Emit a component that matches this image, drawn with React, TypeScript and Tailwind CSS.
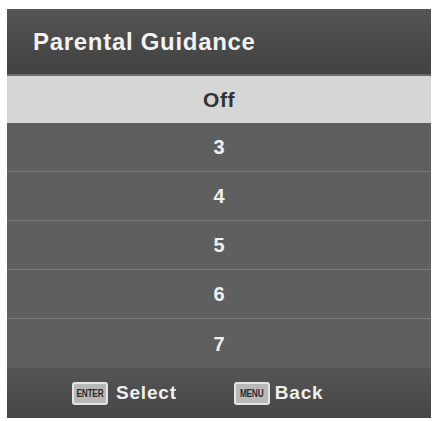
const items = ["3", "4", "5", "6", "7"];

function KeyBadge({ label }: { label: string }) {
  return (
    <span className="flex h-[23px] w-[36px] items-center justify-center rounded-[3px] border-2 border-[#e4e4e4] bg-[#b8b8b8]">
      <span className="scale-x-75 text-[11px] font-bold leading-none tracking-tight text-[#2a2a2a]">
        {label}
      </span>
    </span>
  );
}

export default function App() {
  return (
    <div
      className="h-[421px] w-[434px] bg-white pl-[7px] pr-[3px] pt-[9px]"
      style={{ fontFamily: '"Liberation Sans", Arial, sans-serif' }}
    >
      <div className="flex flex-col overflow-hidden bg-[#5c5c5c]">
        <div className="flex h-[67px] items-center bg-gradient-to-b from-[#555] via-[#4a4a4a] to-[#424242] px-[26px] border-b-2 border-[#6a6a6a]">
          <h1 className="text-[24px] font-bold tracking-[0.7px] text-[#f2f2f2]">
            Parental Guidance
          </h1>
        </div>
        <div className="flex h-[47px] items-center justify-center bg-[#d6d6d6] text-[21px] font-bold tracking-[0.5px] text-[#333]">
          Off
        </div>
        {items.map((n, i) => (
          <div
            key={n}
            className={`flex h-[49px] items-center justify-center bg-[#5f5f5f] text-[20px] font-bold text-[#f0f0f0] ${
              i < items.length - 1 ? "border-b border-[#7a7a7a]" : ""
            }`}
          >
            {n}
          </div>
        ))}
        <div className="flex h-[50px] items-center bg-gradient-to-b from-[#555] to-[#464646] pl-[65px] text-[19px] font-bold text-[#efefef]">
          <KeyBadge label="ENTER" />
          <span className="ml-[8px] tracking-[0.8px]">Select</span>
          <span className="ml-[57px]">
            <KeyBadge label="MENU" />
          </span>
          <span className="ml-[5px] tracking-[0.8px]">Back</span>
        </div>
      </div>
    </div>
  );
}
